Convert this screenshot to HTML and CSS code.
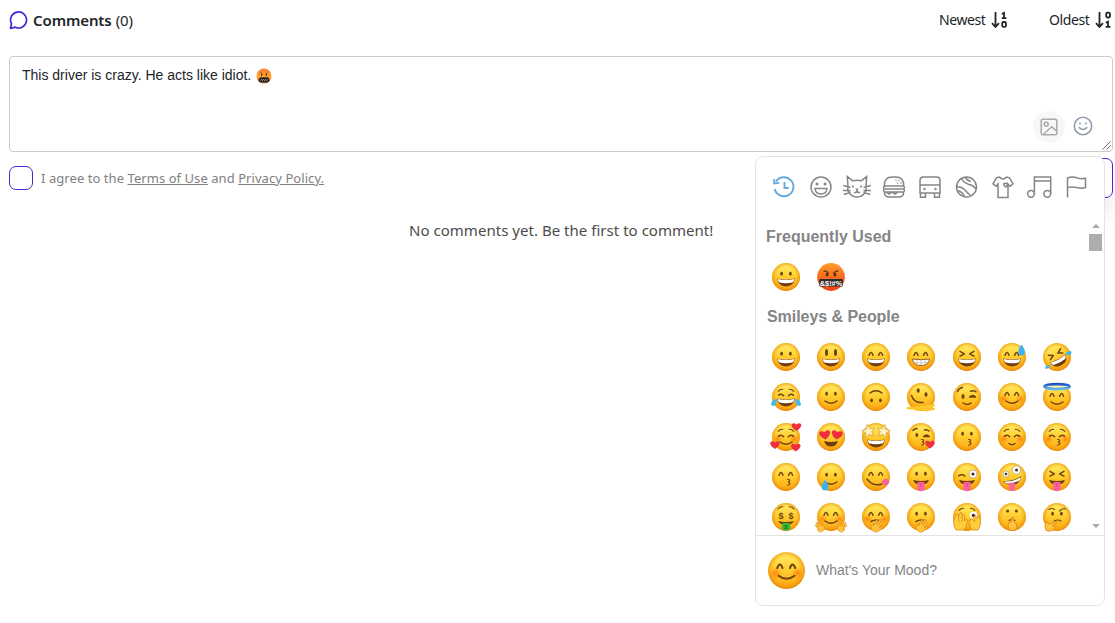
FILE: index.html
```
<!DOCTYPE html>
<html lang="en">
<head>
<meta charset="utf-8">
<title>Comments</title>
<link rel="stylesheet" href="styles.css">
</head>
<body>
<svg class="sprite" aria-hidden="true">
  <defs>
    <linearGradient id="yellow" x1="0" y1="0" x2="0" y2="1"><stop offset="0" stop-color="#fff06a"/><stop offset=".5" stop-color="#ffcc2e"/><stop offset="1" stop-color="#fba30f"/></linearGradient>
    <radialGradient id="rim" cx=".5" cy=".48" r=".53"><stop offset=".66" stop-color="#f59a0b" stop-opacity="0"/><stop offset=".88" stop-color="#f3970c" stop-opacity=".65"/><stop offset="1" stop-color="#dd7804"/></radialGradient>
    <linearGradient id="angry" x1="0" y1="0" x2="0" y2="1"><stop offset="0" stop-color="#ff9b2d"/><stop offset="1" stop-color="#ee3f13"/></linearGradient>
    <linearGradient id="orange" x1="0" y1="0" x2="0" y2="1"><stop offset="0" stop-color="#ff7a3c"/><stop offset=".5" stop-color="#ffa42c"/><stop offset="1" stop-color="#f57a22"/></linearGradient>
    <linearGradient id="halo" x1="0" y1="0" x2="0" y2="1"><stop offset="0" stop-color="#1d50c8"/><stop offset="1" stop-color="#63b7f5"/></linearGradient>
    <radialGradient id="cheek"><stop offset="0" stop-color="#ff6b0b" stop-opacity=".75"/><stop offset="1" stop-color="#ff8a10" stop-opacity="0"/></radialGradient>
    <g id="face"><circle cx="16" cy="16" r="13.900" fill="url(#yellow)"/><circle cx="16" cy="16" r="13.900" fill="url(#rim)"/></g>
    <g id="dots" fill="#6d430c"><ellipse cx="11.600" cy="12.700" rx="1.400" ry="1.900"/><ellipse cx="20.400" cy="12.700" rx="1.400" ry="1.900"/></g>
    <g id="arcs" class="ink"><path d="M9 14.200q2-5.400 4 0M18.600 14.200q2-5.400 4 0"/></g>
    <g id="closed" class="ink"><path d="M8.600 14.200q2.600-2 5 .6M18.400 14.800q2.400-2.600 5-.6"/></g>
    <g id="brows" class="ink thin"><path d="M8.200 10.400q1.800-2.400 4.600-2.200M19.200 8.200q2.800-.2 4.600 2.200"/></g>
    <g id="squint" class="ink"><path d="M9 10.400l4.400 2.500L9 15.200M23 10.400l-4.400 2.500 4.400 2.300"/></g>
    <g id="grin"><path d="M7.200 17.600q8.800 1.800 17.600 0-.8 7.800-8.800 7.800t-8.800-7.800z" fill="#713d0c"/><path d="M7.800 18q8.200 1.700 16.400 0-.2 3.200-1.600 3.600-6.600 1.300-13.200 0-1.400-.4-1.600-3.600z" fill="#fff"/></g>
    <g id="smile" class="ink"><path d="M10 20q6 4.600 12 0"/></g>
    <g id="kiss" class="ink thin"><path d="M16.500 18.500q4 .2 1.200 2.300-1 .5.500.7 2.200 1.500-1.700 2.700"/></g>
    <g id="blush"><circle cx="7.600" cy="18" r="5" fill="url(#cheek)"/><circle cx="24.400" cy="18" r="5" fill="url(#cheek)"/></g>
    <path id="heart" d="M0 4C-8-1-4.500-6 0-2.600 4.500-6 8-1 0 4z" fill="#ee2f3e"/>
    <path id="drop" d="M0-5.500C3-1 3.500 0 3.400 2A3.400 3.400 0 0 1-3.400 2C-3.500 0-2-2 0-5.500z" fill="#3db2ef"/>
    <g id="tongue"><path d="M8 19q8 2 16 0-1.500 4.500-8 4.500T8 19z" fill="#713d0c"/><path d="M12.500 21.300q3.500-1.200 7 0v6q-.3 3-3.500 3t-3.500-3z" fill="#fb5fa4"/><path d="M16 22v4" stroke="#d93c83" stroke-width=".8"/></g>
    <path id="star" d="M0-6L1.700-2 6-1.600 2.800 1.200 3.700 5.400 0 3.200-3.700 5.400-2.800 1.200-6-1.600-1.700-2z" fill="#fff3bd" stroke="#d9a044" stroke-width=".7"/>
    <path id="hand" d="M-4 5q-1.500-4 0-5l1 2-1-7q1.500-1 1.900 1l.7 3-.2-6q1.500-1 1.900.5l.2 5.500 1-5q1.600-.5 1.600 1L2.800.5l1.500-3q1.400 0 1.100 1.500L3.800 4.500Q1 8-4 5z" fill="#ffc43b" stroke="#dc8615" stroke-width=".6"/>
    <g id="cursing"><circle cx="16" cy="16" r="13.900" fill="url(#angry)"/><g class="ink"><path d="M9 10q3 0 4.400 2.500M23 10q-3 0-4.400 2.500"/></g><ellipse cx="12" cy="13.800" rx="1.300" ry="1.700" fill="#532008"/><ellipse cx="20" cy="13.800" rx="1.300" ry="1.700" fill="#532008"/><rect x="4.300" y="18" width="23.600" height="7.500" rx="1" fill="#302b2b"/><text x="16" y="24.600" class="curse" textLength="22.500" lengthAdjust="spacingAndGlyphs">&amp;$!#%</text></g>
  </defs>
</svg>

<main class="comments">
  <header class="head">
    <svg class="bubble" viewBox="0 0 20 20"><path d="M1.500 18.300l1-4.600A8 8 0 1 1 6.200 17.200z"/></svg>
    <h1 class="title">Comments</h1><span class="count">(0)</span>
    <div class="sorts">
      <span class="sort"><span class="newest">Newest</span><svg class="sort-icon" viewBox="0 0 18 18"><path d="M4.500 1v15M1 12.200L4.500 16 8 12.200"/><path d="M10.800 3l2.200-1v5M10.800 7.200h4.600"/><rect x="11.200" y="11" width="3.800" height="4.900" rx="1.500"/></svg></span>
      <span class="sort"><span class="oldest">Oldest</span><svg class="sort-icon" viewBox="0 0 18 18"><path d="M4.500 1v15M1 12.200L4.500 16 8 12.200"/><rect x="11.200" y="1.600" width="3.800" height="4.900" rx="1.500"/><path d="M10.800 11.700l2.200-1v5M10.800 15.900h4.600"/></svg></span>
    </div>
  </header>

  <section class="editor">
    <p class="draft">This driver is crazy. He acts like idiot.<svg class="inline-emoji" viewBox="0 0 16 16"><circle cx="8" cy="8" r="7.500" fill="url(#orange)"/><path d="M3.500 3.800l2.500 1M12.500 3.800l-2.500 1" stroke="#a04a14" stroke-width=".6"/><path d="M5.700 5.500v2.200M10.300 5.500v2.200" stroke="#33231e" stroke-width="1.200"/><path d="M4.500 9.300h7.200q2 1 1.800 3-.2 2-2 2.200H4.300q-1.800-.3-1.800-2.200 0-2 2-3z" fill="#2b2523"/><path d="M4.500 12.500l1-1 1 1 1-1 1 1 1-1 1 1 1-1" fill="none" stroke="#ddd" stroke-width=".7"/></svg></p>
    <div class="tools">
      <span class="image-button"><svg class="image-icon" viewBox="0 0 18 18"><rect x="1.200" y="1.200" width="15.600" height="15.600" rx="1.500"/><circle cx="6.200" cy="6.200" r="2"/><path d="M3.500 16.300l8.200-7.500 4.800 4"/></svg></span>
      <svg class="smile-icon" viewBox="0 0 20 20"><circle cx="10" cy="10" r="8.700"/><path d="M6.200 11.700q3.800 3.600 7.600 0"/><path d="M7 7v.6M13 7v.6" stroke-width="1.700"/></svg>
    </div>
    <svg class="grip" viewBox="0 0 9 9"><path d="M.5 8.500l8-8M4.500 8.500l4-4"/></svg>
  </section>

  <div class="consent">
    <span class="checkbox"></span>
    <p class="agree">I agree to the <a>Terms of Use</a> and <a>Privacy Policy.</a></p>
    <span class="submit"></span>
  </div>
  <p class="empty">No comments yet. Be the first to comment!</p>
</main>

<aside class="picker">
  <nav class="tabs">
    <svg class="tab active" viewBox="0 0 28 24"><path d="M6 6.500A9.500 9.500 0 1 1 4.700 14"/><path d="M4.200 4v4.500l5-.6M14.500 7v6h4.300"/></svg>
    <svg class="tab" viewBox="0 0 28 24"><circle cx="14" cy="12" r="10"/><path d="M8 13.500h12q-.5 5.500-6 5.500t-6-5.500z"/><g class="solid"><circle cx="10" cy="9" r="1.500"/><circle cx="18" cy="9" r="1.500"/></g></svg>
    <svg class="tab" viewBox="0 0 28 24"><path d="M5 12L4.300 1.500l5.500 4.300q4.200-1.300 8.400 0l5.500-4.300L23 12q1 4-2 7-3 3-7 3t-7-3q-3-3-2-7zM.3 10.500l7.200 2M0 15.500h7.500M.8 19.500l6.700-2.300M27.700 10.500l-7.200 2M28 15.500h-7.500M27.200 19.500l-6.700-2.300M14 15q0 3-3 2.500M14 15q0 3 3 2.500"/><g class="solid"><circle cx="10" cy="11.500" r="1.100"/><circle cx="18" cy="11.500" r="1.100"/><path d="M12 13.500h4l-2 2z"/></g></svg>
    <svg class="tab" viewBox="0 0 28 24"><path d="M4.300 11q-.5-9 8.200-9h3q8.700 0 8.200 9zM4.500 11h19M4 14h20M4 17h20M6 17l3 2 3-2 3 2 3-2M4.500 17v1q0 4 5 4h9q5 0 5-4v-1M4.500 11q-2 1.500 0 3-2 1.500 0 3M23.500 11q2 1.500 0 3 2 1.500 0 3"/><path class="dotted" d="M16 5h.1M19 5.500h.1M17.500 8h.1M21 8h.1"/></svg>
    <svg class="tab" viewBox="0 0 28 24"><path d="M4 18V5.500Q4 2 7.500 2h13Q24 2 24 5.500V18zM4 10h20M4.500 18v4.300h5V18M18.500 18v4.300h5V18"/><g class="solid"><circle cx="8.500" cy="14" r="1.200"/><circle cx="19.500" cy="14" r="1.200"/></g></svg>
    <svg class="tab" viewBox="0 0 28 24"><circle cx="13.500" cy="12" r="10"/><path d="M8.500 3.500q2.500 4.500 7 5.700 5 1 7.500 5M12 2.200q2.500 3.500 5.800 4.300M4 11.800q5 0 8 3.200 2.500 3 5.500 5.500M4.500 15.800q4.500.2 7 5.700"/></svg>
    <svg class="tab" viewBox="0 0 28 24"><path d="M10.500 2q3.500 4 7 0l3 .8 3.500 6-3 2.500L19 9v13.500H9V9l-2 2.300-3-2.500 3.500-6zM15 8.500h3.500v2l-1.700 1.500-1.800-1.500z"/></svg>
    <svg class="tab" viewBox="0 0 28 24"><circle cx="5" cy="18.800" r="3.400"/><circle cx="21.300" cy="18.800" r="3.400"/><path d="M8.400 18.500V2h16.300v16.500M8.400 6h16.300"/></svg>
    <svg class="tab" viewBox="0 0 28 24"><path d="M5.500 22.500V3q5-2 10 0 4 1.300 8 .3v9.200q-4.500 1.500-9 0-4.500-1-9 0"/></svg>
  </nav>

  <div class="list">
    <div class="groups">
      <h2 class="group-title">Frequently Used</h2>
      <div class="grid">
        <svg class="emoji" viewBox="0 0 32 32"><use href="#face"/><use href="#dots"/><use href="#grin"/></svg>
        <svg class="emoji" viewBox="0 0 32 32"><use href="#cursing"/></svg>
      </div>
      <h2 class="group-title people">Smileys &amp; People</h2>
      <div class="grid">
        <svg class="emoji" viewBox="0 0 32 32"><use href="#face"/><use href="#dots"/><use href="#grin"/></svg>
        <svg class="emoji" viewBox="0 0 32 32"><use href="#face"/><g fill="#6d430c"><ellipse cx="11.500" cy="11.500" rx="1.500" ry="3.500"/><ellipse cx="20.500" cy="11.500" rx="1.500" ry="3.500"/></g><use href="#grin"/></svg>
        <svg class="emoji" viewBox="0 0 32 32"><use href="#face"/><use href="#arcs"/><use href="#grin"/></svg>
        <svg class="emoji" viewBox="0 0 32 32"><use href="#face"/><use href="#arcs"/><path d="M7.500 18q8.500 1.500 17 0-.5 6.500-8.500 6.500T7.500 18z" fill="#fff" stroke="#98632a"/><path d="M8.500 21.300q7.500 1.200 15 0M12 19v4.500M16 19v5M20 19v4.500" fill="none" stroke="#b5aaa0" stroke-width=".6"/></svg>
        <svg class="emoji" viewBox="0 0 32 32"><use href="#face"/><use href="#squint"/><use href="#grin"/></svg>
        <svg class="emoji" viewBox="0 0 32 32"><use href="#face"/><use href="#arcs"/><use href="#grin"/><use href="#drop" x="25.500" y="9"/></svg>
        <svg class="emoji" viewBox="0 0 32 32"><g transform="rotate(-28 16 16)"><use href="#face"/><use href="#squint"/><use href="#grin"/></g><path d="M24 12.800q3-3 6.700-2.300-.3 4-3.700 3.700zM9.500 24q-5-.5-5.500 3.700 4.500.5 5.500-3.700z" fill="#40b9ec"/></svg>

        <svg class="emoji" viewBox="0 0 32 32"><use href="#face"/><use href="#closed"/><use href="#brows"/><use href="#grin"/><path d="M7 18q-5.500.5-6 5.300 1 3 4 1 2-2.300 2-6.300zM25 18q5.500.5 6 5.300-1 3-4 1-2-2.300-2-6.300z" fill="#43b7ee"/></svg>
        <svg class="emoji" viewBox="0 0 32 32"><use href="#face"/><use href="#dots"/><use href="#smile"/></svg>
        <svg class="emoji" viewBox="0 0 32 32"><use href="#face"/><g transform="rotate(180 16 16)"><use href="#dots"/><use href="#smile"/></g></svg>
        <svg class="emoji" viewBox="0 0 32 32"><use href="#face"/><path d="M1.500 26.500q3-1 6.500-.5l9-1 9-1.500q5-1 4 1.500l-3 1.500q4 .5 3 2.500l-5 .5-3 1-5-1-5 .5-4-1.500-6-.2z" fill="#ffc62c"/><g fill="#6d430c"><ellipse cx="13.200" cy="9.500" rx="1.500" ry="2.300"/><ellipse cx="21" cy="13.500" rx="1.500" ry="2.300"/></g><path class="ink" d="M6.500 14.500q2.500 8 11.500 7"/></svg>
        <svg class="emoji" viewBox="0 0 32 32"><use href="#face"/><path class="ink" d="M6.500 10.500q1.500-3.500 5-4M19.500 10.300q3-1.200 5.500.5M18.800 16q2.700-3 5.800 0M18.800 16.100l5.500-.2M12 22q4.500 3 8 0"/><ellipse cx="12" cy="15.500" rx="1.500" ry="2.400" fill="#6d430c"/></svg>
        <svg class="emoji" viewBox="0 0 32 32"><use href="#face"/><use href="#blush"/><use href="#arcs"/><use href="#smile"/></svg>
        <svg class="emoji" viewBox="0 0 32 32"><use href="#face"/><ellipse cx="16" cy="5.600" rx="12.600" ry="2.500" fill="#fff6a7" stroke="url(#halo)" stroke-width="2.600"/><use href="#arcs" y="1"/><use href="#smile" y="1"/></svg>

        <svg class="emoji" viewBox="0 0 32 32"><use href="#face"/><use href="#blush"/><use href="#closed" y="1"/><use href="#brows"/><use href="#smile" y="1"/><use href="#heart" x="26.500" y="6"/><use href="#heart" x="5" y="24"/><use href="#heart" x="25.800" y="26.500"/></svg>
        <svg class="emoji" viewBox="0 0 32 32"><use href="#face"/><g transform="translate(10 14) rotate(-8) scale(1.150)"><use href="#heart"/></g><g transform="translate(22 14) rotate(8) scale(1.150)"><use href="#heart"/></g><path d="M9 20q7 2 14 0-1.500 5.500-7 5.500T9 20z" fill="#713d0c"/></svg>
        <svg class="emoji" viewBox="0 0 32 32"><use href="#face"/><use href="#grin" y="1"/><g transform="translate(8.500 10) rotate(-12) scale(1.100)"><use href="#star"/></g><g transform="translate(23.500 10) rotate(12) scale(1.100)"><use href="#star"/></g></svg>
        <svg class="emoji" viewBox="0 0 32 32"><use href="#face"/><path class="ink" d="M8 9.500q1.500-2 4-2M19.500 9q2.500-1 4.500 1M18.700 15.500q2.500-3 5.500 0l-5.500 0"/><ellipse cx="11.800" cy="14" rx="1.400" ry="2" fill="#6d430c"/><use href="#kiss"/><use href="#heart" x="25" y="23.500"/></svg>
        <svg class="emoji" viewBox="0 0 32 32"><use href="#face"/><use href="#dots"/><use href="#kiss" x="1"/></svg>
        <svg class="emoji" viewBox="0 0 32 32"><use href="#face"/><use href="#blush"/><use href="#closed" y="1"/><use href="#brows"/><path class="ink" d="M13 22.500q3 2.500 6 0"/></svg>
        <svg class="emoji" viewBox="0 0 32 32"><use href="#face"/><use href="#blush"/><use href="#closed" y="1"/><use href="#brows"/><use href="#kiss"/></svg>

        <svg class="emoji" viewBox="0 0 32 32"><use href="#face"/><use href="#arcs"/><use href="#kiss" x="1"/></svg>
        <svg class="emoji" viewBox="0 0 32 32"><use href="#face"/><use href="#dots" y="1"/><use href="#smile" y="1"/><use href="#drop" x="10" y="24"/></svg>
        <svg class="emoji" viewBox="0 0 32 32"><use href="#face"/><use href="#arcs"/><path class="ink" d="M7 18q6 8 15 5"/><path d="M21.500 21q3-5 6.500-2.500 3 5-3 6z" fill="#fb5fa4"/></svg>
        <svg class="emoji" viewBox="0 0 32 32"><use href="#face"/><use href="#dots"/><use href="#tongue"/></svg>
        <svg class="emoji" viewBox="0 0 32 32"><use href="#face"/><path class="ink" d="M7.500 15q3-2.500 6.500 0"/><circle cx="22" cy="13" r="4" fill="#fff" stroke="#b6a98e" stroke-width=".8"/><circle cx="22" cy="13" r="1.600" fill="#49321c"/><use href="#tongue"/></svg>
        <svg class="emoji" viewBox="0 0 32 32"><use href="#face"/><circle cx="10" cy="13" r="3" fill="#fff" stroke="#b6a98e" stroke-width=".8"/><circle cx="20.500" cy="9" r="4.200" fill="#fff" stroke="#b6a98e" stroke-width=".8"/><circle cx="10" cy="13" r="1.300" fill="#49321c"/><circle cx="20.500" cy="9" r="1.500" fill="#49321c"/><path d="M7 20q10 1 18-5-1 9-9 9-6 0-9-4z" fill="#713d0c"/><path d="M8 20.300q9 1 16.500-4l-.5 3q-7 4-14 3z" fill="#fff"/><path d="M13 22.500q3-2 6 0v5q-1 3-3 2.500-3-.5-3-3z" fill="#fb5fa4"/></svg>
        <svg class="emoji" viewBox="0 0 32 32"><use href="#face"/><use href="#squint"/><use href="#tongue"/></svg>

        <svg class="emoji" viewBox="0 0 32 32"><use href="#face"/><use href="#brows" y="-2.500"/><g class="money"><text x="11" y="18">$</text><text x="21" y="18">$</text></g><path d="M8 20q8 2 16 0-2 4-8 4t-8-4z" fill="#713d0c"/><path d="M12.500 22h7l1 6q-4.500 3-9 0z" fill="#38bb35"/><text class="bill" x="16" y="28">$</text></svg>
        <svg class="emoji" viewBox="0 0 32 32"><use href="#face"/><use href="#blush"/><use href="#arcs"/><use href="#smile"/><g transform="translate(5 26) rotate(-35) scale(.8)"><use href="#hand"/></g><g transform="translate(27 26) rotate(35) scale(-.8 .8)"><use href="#hand"/></g></svg>
        <svg class="emoji" viewBox="0 0 32 32"><use href="#face"/><use href="#blush"/><use href="#arcs"/><path class="ink" d="M11 20.500q4-2.500 8-1"/><g transform="translate(17 25) rotate(35)"><use href="#hand"/></g></svg>
        <svg class="emoji" viewBox="0 0 32 32"><use href="#face"/><use href="#dots"/><path class="ink" d="M11 20.500q4-2.500 8-1"/><g transform="translate(17 25) rotate(35)"><use href="#hand"/></g></svg>
        <svg class="emoji" viewBox="0 0 32 32"><use href="#face"/><use href="#brows" y="-1"/><circle cx="22.500" cy="14.500" r="3.800" fill="#fff"/><circle cx="22.500" cy="14.500" r="1.800" fill="#49321c"/><path d="M5 29q-4-6-1-13l2-3q1.500-1 1.500 2l2-3.500q2-.5 1.500 3 2-2.500 2.500 0v5.500l2-2q1.500.5.500 4-1 6-4 7zM27 29q4-6 2-12l-2-2.500q-1.500 0-1 3L24 15q-2 0-1 3l1 3-3.500-3.500q-1.500 0-.5 2l-1.500-.5q-1 1 0 4 1 5 3 6z" fill="#ffcc3a" stroke="#d98a17" stroke-width=".8"/><path d="M7.500 15l.5 6M11 14.500v6" stroke="#d98a17" stroke-width=".8"/></svg>
        <svg class="emoji" viewBox="0 0 32 32"><use href="#face"/><g fill="#6d430c"><circle cx="11.600" cy="10" r="1.500"/><circle cx="20.400" cy="10" r="1.500"/></g><path class="ink thin" d="M13 19.500q3-2 6 0"/><path d="M14.500 29.500q-4-4-1.500-8l2.500-1 .3-4q1-1 1.700.5l.5 4q3 .5 3 5-1 4-6.500 3.500z" fill="#ffc43b" stroke="#d98115" stroke-width=".8"/></svg>
        <svg class="emoji" viewBox="0 0 32 32"><use href="#face"/><use href="#dots"/><path class="ink thin" d="M8 8.500q2.500-2 5.500 0M18.500 10q3-3 6-2M13 20q4-2 7 0"/><path d="M5 21q2-1 3 2l7-2.500q2 .5 0 2l-4 2q5 1 2 4-5 3-8 1-2-4 0-8.500z" fill="#ffc43b" stroke="#d98115" stroke-width=".8"/></svg>
      </div>
    </div>
    <div class="scrollbar"><span class="arrow up"></span><span class="thumb"></span><span class="arrow down"></span></div>
  </div>

  <footer class="mood">
    <svg class="mood-emoji" viewBox="2 2 28 28"><use href="#face"/><use href="#blush"/><use href="#arcs"/><use href="#smile"/></svg>
    <span class="mood-text">What's Your Mood?</span>
  </footer>
</aside>
</body>
</html>
```
FILE: styles.css
```
* { box-sizing: border-box; }
body { margin: 0; height: 623px; overflow: hidden; background: #fff; color: #212529; font-family: "Noto Sans", "Open Sans", sans-serif; position: relative; }
h1, h2, p { margin: 0; }
.sprite { position: absolute; width: 0; height: 0; }
.ink { fill: none; stroke: #70430f; stroke-width: 1.5; stroke-linecap: round; stroke-linejoin: round; }
.thin { stroke-width: 1.1; }
.curse { font: bold 8px "Liberation Sans", sans-serif; fill: #fff; text-anchor: middle; }
.money { font: bold 9px "Liberation Sans", sans-serif; fill: #6d430c; text-anchor: middle; }
.bill { font: bold 6px "Liberation Sans", sans-serif; fill: #15731b; text-anchor: middle; }

.comments { padding: 0 2px 0 9px; }
.head { display: flex; align-items: center; height: 40px; }
.bubble { width: 20px; height: 20px; margin-right: 4px; fill: none; stroke: #4527d4; stroke-width: 1.7; stroke-linejoin: round; }
.title { font-size: 15px; font-weight: 600; letter-spacing: -.1px; line-height: 20px; }
.count { margin-left: 4px; font-size: 15px; line-height: 20px; letter-spacing: -.1px; }
.sorts { display: flex; gap: 40px; margin-left: auto; }
.sort { display: flex; align-items: center; gap: 4px; font-size: 14px; line-height: 20px; letter-spacing: -.4px; }
.newest { width: 48px; }
.oldest { width: 42px; }
.sort-icon { width: 18px; height: 18px; fill: none; stroke: #212529; stroke-width: 1.8; }

.editor { position: relative; height: 96px; margin-top: 16px; padding: 10px 12px; border: 1px solid #ccc; border-radius: 4px; }
.draft { display: flex; align-items: center; gap: 5px; font: 14px/17px "Liberation Sans", Arial, sans-serif; color: #212529; }
.inline-emoji { width: 16px; height: 16px; }
.tools { position: absolute; right: 19px; bottom: 8px; display: flex; align-items: center; gap: 8px; }
.image-button { display: flex; align-items: center; justify-content: center; width: 32px; height: 32px; border-radius: 50%; background: #f7f7f7; }
.image-icon { width: 18px; height: 18px; fill: none; stroke: #aaa; stroke-width: 1.5; }
.smile-icon { width: 20px; height: 20px; margin-bottom: 2px; fill: none; stroke: #929dab; stroke-width: 1.6; stroke-linecap: round; }
.grip { position: absolute; right: 1px; bottom: 1px; width: 9px; height: 9px; stroke: #555; stroke-width: .9; }

.consent { display: flex; align-items: center; height: 40px; margin-top: 6px; }
.checkbox { width: 24px; height: 24px; border: 1px solid #4527d4; border-radius: 7px; }
.agree { margin-left: 8px; font-size: 13px; line-height: 20px; color: #808080; letter-spacing: .06px; }
.agree a { text-decoration: underline; }
.submit { width: 110px; height: 40px; margin-left: auto; border: 1px solid #4527d4; border-radius: 7px; box-shadow: 0 18px 20px rgba(0, 0, 0, .07); }
.empty { margin-top: 22px; padding-left: 400px; font-size: 15px; line-height: 20px; letter-spacing: .03px; color: #4c4c4c; white-space: nowrap; }

.picker { position: absolute; left: 755px; top: 156px; display: flex; flex-direction: column; width: 350px; height: 450px; border: 1px solid #e3e3e3; border-radius: 8px; background: #fff; font-family: "Liberation Sans", Arial, sans-serif; color: #858585; }
.tabs { display: flex; gap: 8.5px; padding: 18px 0 18px 14px; }
.tab { flex: none; width: 28px; height: 24px; fill: none; stroke: #858585; stroke-width: 1.5; }
.tab.active { stroke: #65aadd; stroke-width: 1.9; }
.solid { fill: #858585; stroke: none; }
.dotted { stroke-linecap: round; stroke-width: 1.3; }
.list { display: flex; justify-content: space-between; height: 318px; overflow: hidden; }
.groups { flex: none; width: 324px; }
.group-title { height: 40px; padding-left: 10px; font-size: 16px; font-weight: 700; line-height: 39px; }
.people { padding-left: 11px; letter-spacing: -.05px; }
.grid { display: grid; grid-template-columns: repeat(7, 45.17px); grid-auto-rows: 40px; padding-left: 7.3px; align-items: center; justify-items: center; }
.emoji { width: 32px; height: 32px; overflow: visible; }
.scrollbar { display: flex; flex-direction: column; align-items: center; width: 13px; margin-right: 2px; padding: 7px 0 7px; }
.arrow { border: 4px solid transparent; border-top-width: 0; border-bottom: 4px solid #a8a8a8; }
.arrow.down { margin-top: auto; transform: rotate(180deg); }
.thumb { width: 13px; height: 17px; margin-top: 6px; background: #adadad; }
.mood { display: flex; align-items: center; flex: 1; padding-left: 12px; border-top: 1px solid #e3e3e3; }
.mood-emoji { width: 37px; height: 37px; }
.mood-text { margin-left: 11px; font-size: 14px; line-height: 16px; padding-bottom: 1px; }
```
